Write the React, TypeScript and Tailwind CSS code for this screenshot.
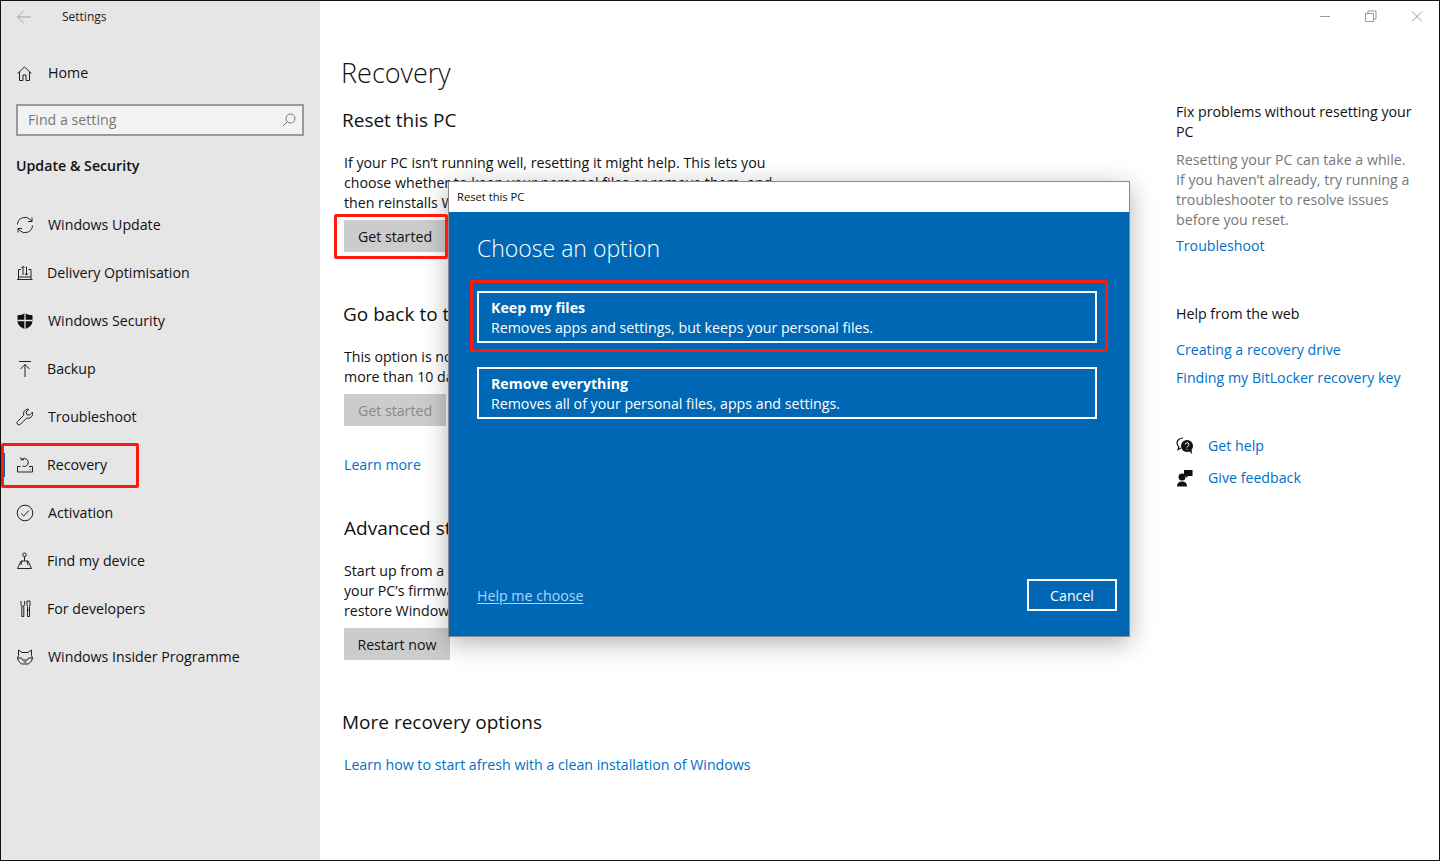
import React from 'react';

const Ico = ({ children, className = '' }: { children: React.ReactNode; className?: string }) => (
    <svg width="18" height="18" viewBox="0 0 18 18" fill="none" stroke="#222" strokeWidth="1" className={`shrink-0 ${className}`}>
        {children}
    </svg>
);

const NAV = [
    {
        label: 'Windows Update',
        pad: 'ml-[14px]',
        icon: (
            <Ico>
                <path d="M1.500 8.500a7.500 7.500 0 0 1 13-4.800l1.500 1.600M16.500 9.500a7.500 7.500 0 0 1-13 4.800l-1.500-1.600" />
                <path d="M16 1.500v4h-4M2 16.500v-4h4" />
            </Ico>
        ),
    },
    {
        label: 'Delivery Optimisation',
        pad: 'ml-[13px]',
        icon: (
            <Ico>
                <path d="M1 15.500h15.500M2.500 15.500v-10H5M15 15.500v-10h-2.500M2.500 13h12.500" />
                <path d="M7 11V2.500M5.500 4 7 2.300 8.500 4M10.500 2.500V11M9 9.500l1.500 1.700L12 9.500" />
            </Ico>
        ),
    },
    {
        label: 'Windows Security',
        pad: 'ml-[14px]',
        icon: (
            <Ico>
                <path
                    d="M9 1C7 2.600 4.500 3.200 1.500 3.200v5.600C1.500 13 5 15.800 9 17c4-1.200 7.500-4 7.500-8.200V3.200C13.500 3.200 11 2.600 9 1Z"
                    fill="#111"
                    stroke="none"
                />
                <path d="M9 1v16M1.500 8.500h15" stroke="#e6e6e6" strokeWidth="1.300" />
            </Ico>
        ),
    },
    {
        label: 'Backup',
        pad: 'ml-[13px]',
        icon: (
            <Ico>
                <path d="M3 1.500h12M9 17V4.500M4.500 9 9 4.500 13.500 9" />
            </Ico>
        ),
    },
    {
        label: 'Troubleshoot',
        pad: 'ml-[14px]',
        icon: (
            <Ico>
                <path d="M11.500 1.200a4.500 4.500 0 0 0-3.700 6L1.600 13.400a1.900 1.900 0 0 0 2.800 2.900l6.300-6.300a4.500 4.500 0 0 0 5.700-5.800l-3 3-2.700-.7-.7-2.600 3-2.500a4 4 0 0 0-1.500-.2Z" />
            </Ico>
        ),
    },
    {
        label: 'Recovery',
        pad: 'ml-[13px]',
        active: true,
        icon: (
            <Ico>
                <path d="M1.500 10.500v5.500h15v-5.500H13M1.500 10.500H4.500M13.500 13.800h1" />
                <path d="M5.600 3.500a4 4 0 1 1 .9 6.500M4.800 1.300 5.300 4l2.700-.3" />
            </Ico>
        ),
    },
    {
        label: 'Activation',
        pad: 'ml-[14px]',
        icon: (
            <Ico>
                <circle cx="9" cy="9" r="7.800" />
                <path d="m5.200 9.500 2.600 2.500 5-5.500" />
            </Ico>
        ),
    },
    {
        label: 'Find my device',
        pad: 'ml-[13px]',
        icon: (
            <Ico>
                <circle cx="8.500" cy="2.800" r="1.800" />
                <path d="M8.500 4.500V9M5 9h7l3.500 7.500h-14L5 9ZM6 9l-1 4M11 9l1 4" />
            </Ico>
        ),
    },
    {
        label: 'For developers',
        pad: 'ml-[13px]',
        icon: (
            <Ico>
                <path d="M5 1v3.500a1.800 1.800 0 0 0 3.600 0V1M5.800 6.500V16.500h2V6.500M11 1h3v4l-.5 1.500v10h-2V6.500L11 5V1ZM11.500 10h2" />
            </Ico>
        ),
    },
    {
        label: 'Windows Insider Programme',
        pad: 'ml-[14px]',
        icon: (
            <Ico>
                <path d="M2.500 2 6 4.500h6L15.500 2v5.500l1 2.500-1 3-3 3h-7l-3-3-1-3 1-2.500V2Z" />
                <path d="M1.500 10h4l1 2h5l1-2h4M6 8h.1M12 8h.1M7.500 14h3" />
            </Ico>
        ),
    },
];

const Heading = ({ children, className = '' }: { children: React.ReactNode; className?: string }) => (
    <h2 className={`text-[19px] leading-[26px] text-[#111] whitespace-nowrap ${className}`}>{children}</h2>
);

const Para = ({ lines, className = '' }: { lines: string[]; className?: string }) => (
    <p className={`text-[14.2px] leading-5 text-[#111] whitespace-nowrap ${className}`}>
        {lines.map((l) => (
            <span key={l} className="block">{l}</span>
        ))}
    </p>
);

const Btn = ({ children, className = '' }: { children: React.ReactNode; className?: string }) => (
    <div className={`flex items-center justify-center bg-[#cccccc] pt-[2px] text-[14.2px] h-8 ${className}`}>{children}</div>
);

const Sidebar = () => (
    <aside className="w-[319px] shrink-0 bg-[#e6e6e6] flex flex-col">
        <div className="flex items-center h-[31px] pl-[15px]">
            <svg width="16" height="14" viewBox="0 0 16 14" fill="none" stroke="#a3a3a3" strokeWidth="1">
                <path d="M15 7H1.500M7.500 1 1.500 7l6 6" />
            </svg>
            <span className="ml-[30px] text-xs text-[#222]">Settings</span>
        </div>
        <div className="flex items-center h-12 mt-[17px] pl-4">
            <svg width="15" height="15" viewBox="0 0 15 15" fill="none" stroke="#222" strokeWidth="1">
                <path d="M.5 7.500 7.500 1l7 6.500M2.500 6v8.500h3.500V9h3v5.500h3.500V6" />
            </svg>
            <span className="ml-4 text-[14.2px] text-[#111]">Home</span>
        </div>
        <div className="ml-[15px] mr-4 mt-[7px] h-8 border-2 border-[#999999] bg-[#f2f2f2] flex items-center justify-between pl-[10px] pr-[6px]">
            <span className="text-[14.2px] text-[#777]">Find a setting</span>
            <svg width="14" height="14" viewBox="0 0 14 14" fill="none" stroke="#777" strokeWidth="1">
                <circle cx="8.500" cy="5.500" r="4.500" />
                <path d="M5.200 8.800 1 13" />
            </svg>
        </div>
        <h3 className="mx-[15px] mt-5 text-[14.2px] font-semibold text-[#111] leading-5">Update &amp; Security</h3>
        <nav className="mt-[25px] flex flex-col">
            {NAV.map((item) => (
                <div key={item.label} className="relative flex items-center h-12 pl-[15px]">
                    {item.active && <div className="absolute left-[1px] top-3 w-[3px] h-6 bg-[#0067b8]" />}
                    {item.icon}
                    <span className={`${item.pad} text-[14.2px] text-[#111] whitespace-nowrap`}>{item.label}</span>
                </div>
            ))}
        </nav>
    </aside>
);

const MainColumn = () => (
    <main className="w-[856px] shrink-0 pl-6 pt-[52px]">
        <h1 className="-ml-[3px] text-[27px] leading-10 font-light text-[#111]">Recovery</h1>
        <Heading className="-ml-[2px] mt-[14px]">Reset this PC</Heading>
        <Para
            className="mt-5"
            lines={[
                'If your PC isn’t running well, resetting it might help. This lets you',
                'choose whether to keep your personal files or remove them, and',
                'then reinstalls Windows.',
            ]}
        />
        <Btn className="mt-[7px] w-[102px]">Get started</Btn>

        <Heading className="-ml-[1px] mt-[49px]">Go back to the previous version of Windows 10</Heading>
        <Para
            className="mt-5"
            lines={['This option is no longer available because your PC was updated', 'more than 10 days ago.']}
        />
        <Btn className="mt-[7px] w-[102px] text-[#8a8a8a]">Get started</Btn>
        <p className="mt-[29px] text-[14.2px] leading-5 text-[#006fc8]">Learn more</p>

        <Heading className="mt-10">Advanced startup</Heading>
        <Para
            className="mt-5"
            lines={[
                'Start up from a device or disc (such as a USB drive or DVD), change',
                'your PC’s firmware settings, change Windows startup settings, or',
                'restore Windows from a system image. This will restart your PC.',
            ]}
        />
        <Btn className="mt-[7px] w-[106px]">Restart now</Btn>

        <Heading className="-ml-[2px] mt-[49px]">More recovery options</Heading>
        <p className="mt-5 text-[14.2px] leading-5 text-[#006fc8]">Learn how to start afresh with a clean installation of Windows</p>
    </main>
);

const RightColumn = () => (
    <section className="flex-1 pt-[101px] text-[14.2px] leading-5">
        <p className="text-[#111]">Fix problems without resetting your<br />PC</p>
        <p className="mt-2 text-[#777]">
            Resetting your PC can take a while.<br />If you haven’t already, try running a<br />troubleshooter to resolve issues<br />before you reset.
        </p>
        <p className="mt-[6px] text-[#006fc8]">Troubleshoot</p>
        <p className="mt-[48px] text-[#111]">Help from the web</p>
        <p className="mt-4 text-[#006fc8]">Creating a recovery drive</p>
        <p className="mt-2 text-[#006fc8]">Finding my BitLocker recovery key</p>
        <div className="mt-[48px] flex items-center h-5">
            <svg width="18" height="18" viewBox="0 0 18 18">
                <path d="M7 1C3.500 1 1 3.300 1 6c0 1.500.7 2.800 1.800 3.700L2 12.500l3-1.500" fill="none" stroke="#111" strokeWidth="1.200" />
                <circle cx="11" cy="9" r="6" fill="#111" />
                <path d="m13 14 3 3-.5-4.500Z" fill="#111" />
                <path d="M9.300 7.500a1.800 1.800 0 1 1 2.500 1.700c-.6.3-.8.600-.8 1.300M11 11.700v1" stroke="#fff" strokeWidth="1" fill="none" />
            </svg>
            <span className="ml-[14px] text-[#006fc8]">Get help</span>
        </div>
        <div className="mt-3 flex items-center h-5">
            <svg width="18" height="18" viewBox="0 0 18 18" fill="#111">
                <circle cx="6" cy="8" r="3.500" />
                <path d="M1 17.500c0-3.500 2-5 5-5s5 1.500 5 5Z" />
                <path d="M8 1h8.500v6H12l-2 2V7H8Z" />
            </svg>
            <span className="ml-[14px] text-[#006fc8]">Give feedback</span>
        </div>
    </section>
);

const WindowControls = () => (
    <div className="absolute top-[1px] right-[1px] flex items-center h-[30px]">
        <svg width="140" height="30" viewBox="0 0 140 30" fill="none" stroke="#999" strokeWidth="1">
            <path d="M22 14.500h10M67.500 11.500h8v8h-8ZM70 11.500V9h8v8h-2.500M114 9.500l10 10M124 9.500l-10 10" />
        </svg>
    </div>
);

const Option = ({ title, text, className = '' }: { title: string; text: string; className?: string }) => (
    <div className={`h-[52px] border-2 border-white px-3 pt-[2px] flex flex-col justify-center text-white text-[14.2px] leading-5 ${className}`}>
        <span className="font-bold">{title}</span>
        <span>{text}</span>
    </div>
);

const Dialog = () => (
    <div className="absolute left-[447px] top-[180px] w-[682px] h-[456px] border border-[#8a8a8a] shadow-[0_6px_24px_rgba(0,0,0,0.3)] flex flex-col">
        <div className="h-[30px] bg-white flex items-center pl-2 text-[11.2px] text-[#111]">Reset this PC</div>
        <div className="flex-1 bg-[#0067b4] flex flex-col px-7 pb-[25px]">
            <h2 className="mt-[19px] h-[34px] leading-[34px] text-[23px] font-light text-white">Choose an option</h2>
            <Option className="mt-[26px] w-[620px]" title="Keep my files" text="Removes apps and settings, but keeps your personal files." />
            <Option className="mt-6 w-[620px]" title="Remove everything" text="Removes all of your personal files, apps and settings." />
            <div className="mt-auto flex items-center justify-between -mr-[16px]">
                <span className="pt-[2px] text-[14.2px] text-[#a6d8ff] underline underline-offset-2">Help me choose</span>
                <div className="w-[90px] h-8 pt-[2px] border-2 border-white flex items-center justify-center text-[14.2px] text-white">Cancel</div>
            </div>
        </div>
    </div>
);

const RedBox = ({ className }: { className: string }) => (
    <div className={`absolute border-[3px] border-[#ff1a0f] rounded-[2px] ${className}`} />
);

export default function App() {
    return (
        <div className="relative w-[1440px] h-[861px] overflow-hidden border border-[#111] bg-white font-['Open_Sans',sans-serif] text-[#111]">
            <div className="flex h-full">
                <Sidebar />
                <MainColumn />
                <RightColumn />
            </div>
            <WindowControls />
            <Dialog />
            <RedBox className="left-[333px] top-[213px] w-[114px] h-[45px]" />
            <RedBox className="left-0 top-[442px] w-[138px] h-[45px]" />
            <RedBox className="left-[469px] top-[279px] w-[638px] h-[72px]" />
        </div>
    );
}
